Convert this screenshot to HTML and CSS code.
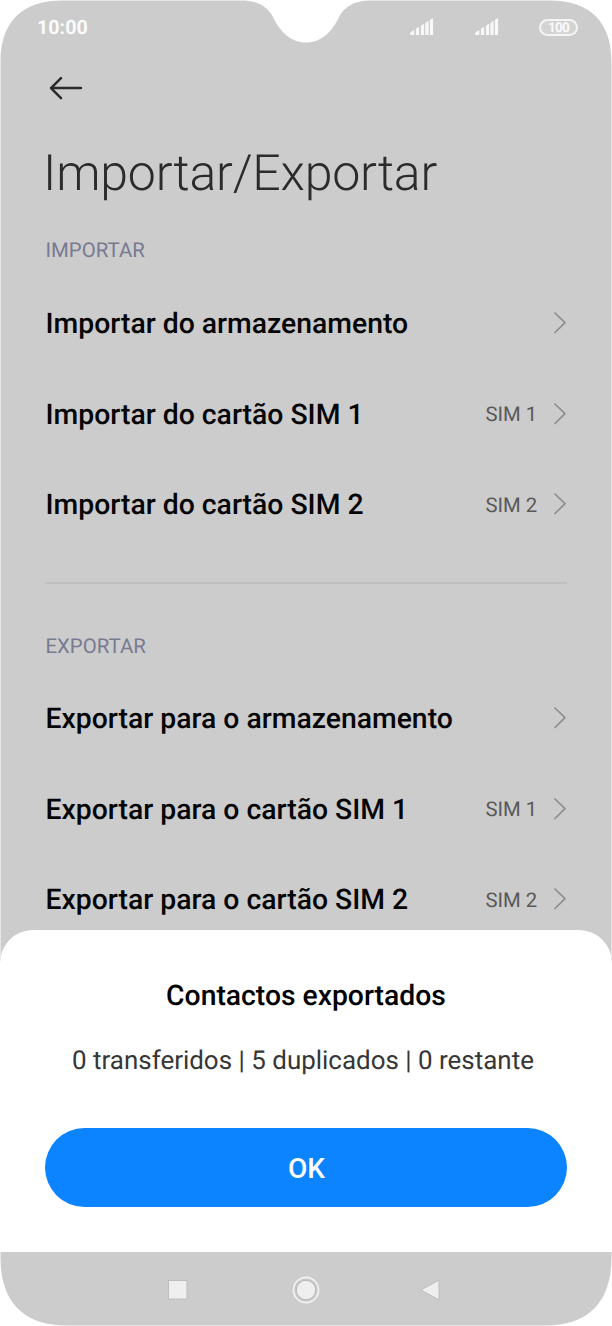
FILE: index.html
```html
<!DOCTYPE html>
<html lang="pt">
<head>
<meta charset="utf-8">
<title>Importar/Exportar</title>
<link rel="stylesheet" href="styles.css">
</head>
<body>
<svg class="defs" width="0" height="0" aria-hidden="true">
  <symbol id="chevron" viewBox="0 0 14 22"><path d="M2 1 12 10.700 2 20.500" fill="none" stroke="#8e8e8e" stroke-width="1.700" stroke-linecap="round" stroke-linejoin="round"/></symbol>
  <symbol id="signal" viewBox="0 0 24 18"><path d="M.3 17V14.500L4.300 12V17ZM5.900 17V10.800L9.100 8.800V17ZM10.900 17V7.700L14.100 5.700V17ZM15.400 17V4.800L18.600 2.800V17ZM19.900 17V1.800L23.100 0V17Z" fill="#f8f8f8"/></symbol>
</svg>
<div class="phone">
  <main class="screen">
    <header class="status">
      <span class="clock">10:00</span>
      <div class="indicators">
        <svg class="signal"><use href="#signal"/></svg>
        <svg class="signal"><use href="#signal"/></svg>
        <span class="battery"><span class="level">100</span></span>
      </div>
    </header>
    <svg class="back" viewBox="0 0 36 26"><path d="M33 13.100H3M13 3.100 3 13.100 13 23.100" fill="none" stroke="#2b2b2b" stroke-width="2.500" stroke-linecap="round" stroke-linejoin="round"/></svg>
    <h1 class="title">Importar/Exportar</h1>
    <section class="group">
      <h2 class="label">IMPORTAR</h2>
      <div class="row"><span class="name">Importar do armazenamento</span><svg class="chevron"><use href="#chevron"/></svg></div>
      <div class="row"><span class="name">Importar do cartão SIM 1</span><span class="value">SIM 1</span><svg class="chevron"><use href="#chevron"/></svg></div>
      <div class="row"><span class="name">Importar do cartão SIM 2</span><span class="value">SIM 2</span><svg class="chevron"><use href="#chevron"/></svg></div>
    </section>
    <section class="group group-export">
      <h2 class="label">EXPORTAR</h2>
      <div class="row"><span class="name">Exportar para o armazenamento</span><svg class="chevron"><use href="#chevron"/></svg></div>
      <div class="row"><span class="name">Exportar para o cartão SIM 1</span><span class="value">SIM 1</span><svg class="chevron"><use href="#chevron"/></svg></div>
      <div class="row"><span class="name">Exportar para o cartão SIM 2</span><span class="value">SIM 2</span><svg class="chevron"><use href="#chevron"/></svg></div>
    </section>
  </main>
  <div class="dialog">
    <h2 class="dialog-title">Contactos exportados</h2>
    <p class="message">0 transferidos | 5 duplicados | 0 restante</p>
    <button class="ok">OK</button>
  </div>
  <nav class="nav">
    <svg class="nav-icon" viewBox="0 0 28 28"><rect x="4.500" y="4.500" width="18.500" height="18.500" fill="#efefef" stroke="#bdbdbd"/></svg>
    <svg class="nav-icon" viewBox="0 0 28 28"><circle cx="14" cy="14" r="12.500" fill="#c8c8c8" stroke="#f0f0f0" stroke-width="1.800"/><circle cx="14" cy="14" r="9.700" fill="#efefef" stroke="#bababa"/></svg>
    <svg class="nav-icon" viewBox="0 0 28 28"><path d="M23 4.200V23.800L4.800 14Z" fill="#efefef" stroke="#bdbdbd" stroke-linejoin="round"/></svg>
  </nav>
</div>
</body>
</html>
```
FILE: styles.css
```css
* { box-sizing: border-box; }
body { margin: 0; background: #fff; font-family: Roboto, sans-serif; text-rendering: geometricPrecision; }
.defs { position: absolute; }
.phone {
  position: relative;
  display: flex;
  flex-direction: column;
  width: 612px;
  height: 1326px;
  background: #ccc;
  clip-path: path("M62 .5H244C258 1 268 7 273 17C280 32 291 42.5 306 42.5C321 42.5 332 32 339 17C344 7 354 1 368 .5H550C590 .5 611.5 22 611.5 62V960H612V1252H611.5V1258C611.5 1302 588 1325.5 546 1325.5H66C24 1325.5 .5 1302 .5 1258V1252H0V960H.5V62C.5 22 22 .5 62 .5Z");
}
.screen { height: 1252px; padding: 0 45px; }
.status { display: flex; justify-content: space-between; align-items: center; height: 54px; margin: 0 -11px 0 -8px; color: #fafafa; }
.clock { font-size: 19.700px; font-weight: 700; }
.indicators { display: flex; align-items: center; }
.signal { width: 24px; height: 18px; margin-right: 41px; }
.signal + .signal { margin-right: 40px; }
.battery { display: flex; align-items: center; justify-content: center; width: 39px; height: 17px; border: 2px solid #f5f5f5; border-radius: 9px; background: #d4d4d4; }
.level { padding-top: 1px; font-size: 13.500px; line-height: 14px; font-weight: 700; letter-spacing: -.7px; }
.back { display: block; width: 36px; height: 26px; margin: 21px 0 0 3px; }
.title { margin: 44px 0 0 -2px; font-size: 50px; line-height: 58px; font-weight: 300; letter-spacing: -.2px; color: #2b2b2b; white-space: nowrap; }
.label { margin: 0 0 16px .5px; font-size: 20.400px; line-height: 24px; font-weight: 400; color: #777a91; }
.group { padding-top: 35px; height: 381px; border-bottom: 2px solid #bfbfbf; }
.group-export { border-bottom: 0; padding-top: 50px; }
.group-export .label { margin-bottom: 15px; }
.row { display: flex; align-items: center; height: 90.600px; }
.name { flex: 1; padding: 1px 0 0 .5px; font-size: 28.350px; font-weight: 500; color: #050505; white-space: nowrap; }
.value { width: 67.500px; padding-top: 1px; font-size: 20.300px; color: #595959; }
.chevron { width: 14px; height: 22px; }
.dialog {
  position: absolute;
  top: 930px;
  left: 0;
  right: 0;
  height: 322px;
  padding: 49px 45px 45px;
  border-radius: 33px 33px 0 0;
  background: #fff;
  text-align: center;
}
.dialog-title { margin: 0; font-size: 28.300px; line-height: 34px; font-weight: 500; color: #000; }
.message { margin: 32px 6px 51px 0; font-size: 25.950px; line-height: 32px; color: #363636; white-space: nowrap; }
.ok { display: block; width: 522px; height: 79px; padding: 2px 0 0 1px; border: 0; border-radius: 40px; background: #0d84ff; color: #fff; font: 500 28px Roboto, sans-serif; }
.nav { display: grid; grid-template-columns: 28px 28px 28px; column-gap: 100px; padding: 1px 0 0 163.500px; align-items: center; height: 74px; }
.nav-icon { width: 28px; height: 28px; }
.nav-icon:last-child { margin-left: -4px; }
```
